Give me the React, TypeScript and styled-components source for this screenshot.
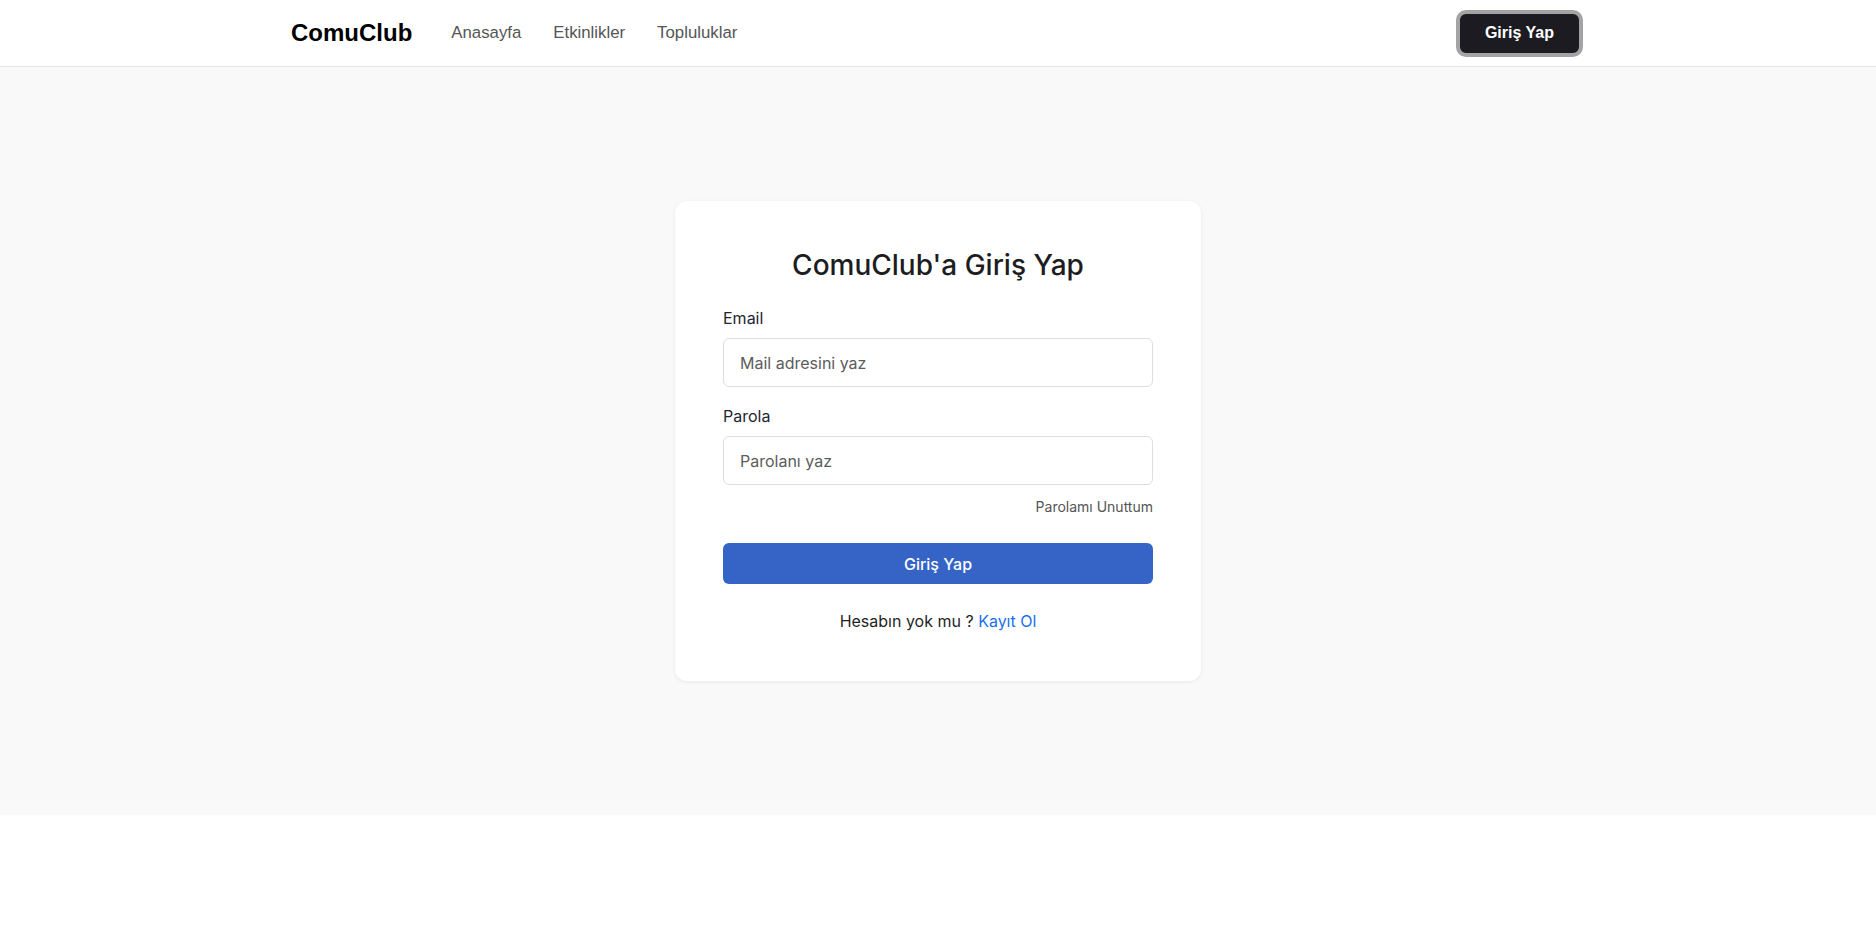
import React from "react";
import styled, { createGlobalStyle } from "styled-components";

const GlobalStyle = createGlobalStyle`
    * {
        box-sizing: border-box;
    }
    body {
        margin: 0;
        background: #ffffff;
        font-family: "Inter", "Noto Sans", sans-serif;
    }
`;

const navItems = ["Anasayfa", "Etkinlikler", "Topluluklar"];

export default function App() {
    return (
        <>
            <GlobalStyle />
            <Header>
                <HeaderInner>
                    <Brand>
                        <Logo href="#">ComuClub</Logo>
                        <Nav>
                            {navItems.map(item => (
                                <NavLink key={item} href="#">
                                    {item}
                                </NavLink>
                            ))}
                        </Nav>
                    </Brand>
                    <HeaderButton type="button">Giriş Yap</HeaderButton>
                </HeaderInner>
            </Header>
            <Main>
                <Card>
                    <Title>ComuClub'a Giriş Yap</Title>
                    <Form onSubmit={e => e.preventDefault()}>
                        <Field>
                            <Label htmlFor="email">Email</Label>
                            <Input id="email" type="email" placeholder="Mail adresini yaz" />
                        </Field>
                        <Field>
                            <Label htmlFor="password">Parola</Label>
                            <Input id="password" type="password" placeholder="Parolanı yaz" />
                        </Field>
                        <ForgotRow>
                            <ForgotLink href="#">Parolamı Unuttum</ForgotLink>
                        </ForgotRow>
                        <SubmitButton type="submit">Giriş Yap</SubmitButton>
                    </Form>
                    <SignupText>
                        Hesabın yok mu ? <SignupLink href="#">Kayıt Ol</SignupLink>
                    </SignupText>
                </Card>
            </Main>
        </>
    );
}

const Header = styled.header`
    height: 67px;
    background: #ffffff;
    border-bottom: 1px solid #e4e4e4;
    box-shadow: 0 1px 3px rgba(0, 0, 0, 0.04);
`;

const HeaderInner = styled.div`
    max-width: 1294px;
    height: 100%;
    margin: 0 auto;
    padding-right: 2px;
    display: flex;
    align-items: center;
    justify-content: space-between;
`;

const Brand = styled.div`
    display: flex;
    align-items: center;
    gap: 39px;
`;

const Logo = styled.a`
    font-family: "Liberation Sans", Arial, sans-serif;
    font-size: 24px;
    font-weight: 700;
    color: #000000;
    text-decoration: none;
`;

const Nav = styled.nav`
    display: flex;
    align-items: center;
    gap: 32px;
`;

const NavLink = styled.a`
    font-family: "Liberation Sans", Arial, sans-serif;
    font-size: 16.8px;
    color: #555555;
    text-decoration: none;
`;

const HeaderButton = styled.button`
    height: 47px;
    padding: 0 25px;
    border: 4px solid #a3a3a3;
    border-radius: 10px;
    background: #1c1b21;
    color: #ffffff;
    font-family: "Liberation Sans", Arial, sans-serif;
    font-size: 16px;
    font-weight: 700;
    cursor: pointer;
`;

const Main = styled.main`
    min-height: 748px;
    background: #f9f9f9;
    display: flex;
    align-items: center;
    justify-content: center;
`;

const Card = styled.section`
    width: 526px;
    padding: 48px;
    background: #ffffff;
    border-radius: 12px;
    box-shadow: 0 1px 4px rgba(0, 0, 0, 0.07);
`;

const Title = styled.h1`
    margin: 0 0 24px;
    font-size: 28px;
    line-height: 1.2;
    font-weight: 500;
    color: #1d1d1f;
    text-align: center;
`;

const Form = styled.form`
    display: flex;
    flex-direction: column;
`;

const Field = styled.div`
    display: flex;
    flex-direction: column;
    & + & {
        margin-top: 17px;
    }
`;

const Label = styled.label`
    margin-bottom: 8px;
    font-size: 16px;
    line-height: 24px;
    color: #1e2633;
`;

const Input = styled.input`
    width: 100%;
    height: 49px;
    padding: 0 16px;
    border: 1px solid #dedede;
    border-radius: 6px;
    font-family: "Inter", sans-serif;
    font-size: 16px;
    color: #222222;
    background: #ffffff;
    outline: none;
    &::placeholder {
        color: #5c5c5c;
    }
`;

const ForgotRow = styled.div`
    margin-top: 11px;
    display: flex;
    justify-content: flex-end;
`;

const ForgotLink = styled.a`
    font-size: 14px;
    line-height: 22px;
    color: #555555;
    text-decoration: none;
`;

const SubmitButton = styled.button`
    margin-top: 25px;
    height: 41px;
    border: none;
    border-radius: 6px;
    background: #3563c6;
    color: #ffffff;
    font-family: "Inter", sans-serif;
    font-size: 16px;
    font-weight: 500;
    cursor: pointer;
`;

const SignupText = styled.p`
    margin: 25px 0 0;
    font-size: 16px;
    line-height: 24px;
    color: #1f1f1f;
    text-align: center;
`;

const SignupLink = styled.a`
    color: #1a6ff0;
    text-decoration: none;
`;
